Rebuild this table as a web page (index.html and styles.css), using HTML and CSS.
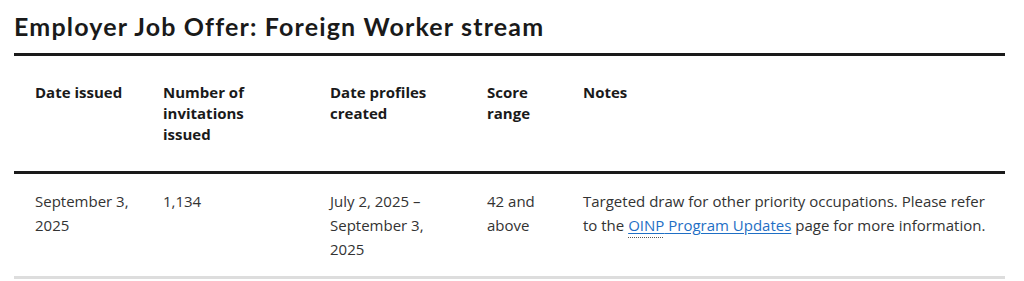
FILE: index.html
```html
<!DOCTYPE html>
<html lang="en">
<head>
<meta charset="utf-8">
<title>Employer Job Offer: Foreign Worker stream</title>
<link rel="stylesheet" href="styles.css">
</head>
<body>
<main class="page">
  <h2 class="title">Employer Job Offer: Foreign Worker stream</h2>
  <table class="draws">
    <colgroup>
      <col class="c1"><col class="c2"><col class="c3"><col class="c4"><col class="c5">
    </colgroup>
    <thead>
      <tr>
        <th>Date issued</th>
        <th class="num">Number of invitations issued</th>
        <th>Date profiles created</th>
        <th>Score range</th>
        <th class="last">Notes</th>
      </tr>
    </thead>
    <tbody>
      <tr>
        <td>September 3, 2025</td>
        <td class="num">1,134</td>
        <td>July 2, 2025 – September 3, 2025</td>
        <td>42 and above</td>
        <td class="last">Targeted draw for other priority occupations. Please refer to the <a href="#" class="link"><abbr title="Ontario Immigrant Nominee Program" class="abbr">OINP</abbr> Program Updates</a> page for more information.</td>
      </tr>
    </tbody>
  </table>
</main>
</body>
</html>
```

FILE: styles.css
```css
html, body {
  margin: 0;
  padding: 0;
  background: #ffffff;
}

.page {
  padding: 0 19px 0 14px;
}

.title {
  font-family: "Lato", "Open Sans", sans-serif;
  font-weight: 700;
  font-size: 25px;
  line-height: 32px;
  color: #1a1a1a;
  margin: 10px 0 11px 0;
  letter-spacing: 1.17px;
}

.draws {
  width: 991px;
  border-collapse: collapse;
  table-layout: fixed;
  font-family: "Open Sans", sans-serif;
  font-size: 15px;
}

.c1 { width: 128px; }
.c2 { width: 167px; }
.c3 { width: 157px; }
.c4 { width: 96px; }
.c5 { width: 443px; }

.draws thead tr {
  border-top: 3px solid #1a1a1a;
  border-bottom: 3px solid #1a1a1a;
}

.draws th {
  text-align: left;
  vertical-align: top;
  font-weight: 700;
  color: #1a1a1a;
  line-height: 21px;
  padding: 26px 8px 26px 21px;
}

.draws td {
  vertical-align: top;
  color: #333333;
  line-height: 24px;
  padding: 15px 8px 15px 21px;
}

.draws .num {
  padding-right: 30px;
}

.draws tbody tr {
  border-bottom: 3px solid #dddddd;
}

.draws .last {
  padding-right: 12px;
}

.link {
  color: #1f6fc5;
  text-decoration: underline;
  text-underline-offset: 2px;
}

.abbr {
  text-decoration: underline dotted #555555;
  text-decoration-thickness: 1px;
  text-underline-offset: 6px;
}
```
